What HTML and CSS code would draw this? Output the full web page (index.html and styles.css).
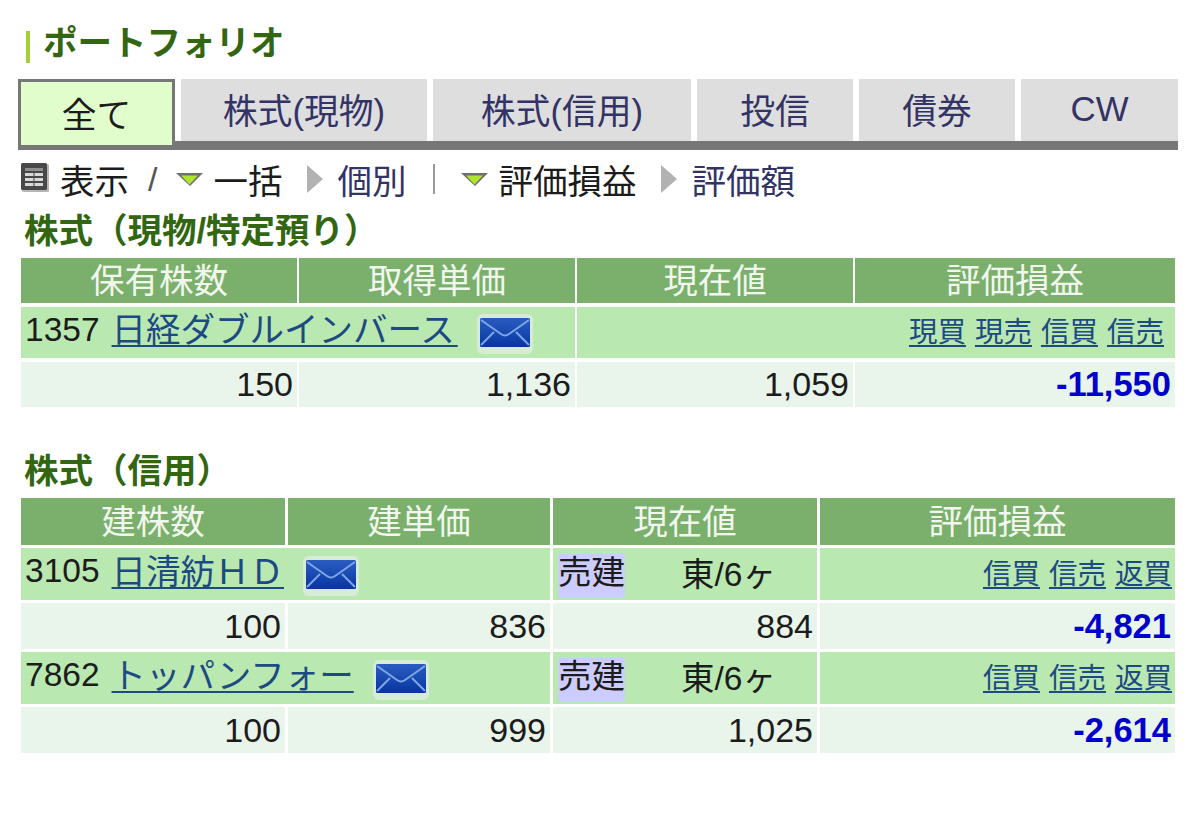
FILE: index.html
```html
<!DOCTYPE html>
<html lang="ja">
<head>
<meta charset="utf-8">
<title>ポートフォリオ</title>
<link rel="stylesheet" href="styles.css">
</head>
<body>
<svg class="defs" width="0" height="0" aria-hidden="true">
  <defs>
    <linearGradient id="envfill" x1="0" y1="0" x2="0" y2="1">
      <stop offset="0" stop-color="#2a5cc0"/>
      <stop offset="0.6" stop-color="#1446ae"/>
      <stop offset="1" stop-color="#0a33a0"/>
    </linearGradient>
    <symbol id="env" viewBox="0 0 56 40">
      <rect x="0" y="0" width="56" height="40" rx="6" fill="#d6ecd6"/>
      <rect x="3" y="4" width="50" height="29" rx="1.5" fill="url(#envfill)"/>
      <path d="M4 6 L24 20 Q28 23 32 20 L52 6 M4 31 L17 18 M52 31 L39 18" fill="none" stroke="#7fa6e4" stroke-width="2"/>
    </symbol>
  </defs>
</svg>

<h1 class="title"><span class="title-bar"></span>ポートフォリオ</h1>

<nav class="tabs">
  <a class="tab tab-active tab-all">全て</a>
  <a class="tab tab-spot">株式(現物)</a>
  <a class="tab tab-margin">株式(信用)</a>
  <a class="tab tab-fund">投信</a>
  <a class="tab tab-bond">債券</a>
  <a class="tab tab-cw">CW</a>
</nav>

<div class="toolbar">
  <svg class="icon-table" viewBox="0 0 28 29" width="28" height="29" aria-hidden="true">
    <rect x="1" y="1" width="27" height="28" rx="1.5" fill="#b5b5b5"/>
    <rect x="0" y="0" width="26" height="27" rx="1.5" fill="#484848"/>
    <rect x="4" y="5" width="18" height="3" fill="#8e8e8e"/>
    <rect x="4" y="10" width="8.5" height="3" fill="#d8d8d8"/>
    <rect x="13.5" y="10" width="8.5" height="3" fill="#d8d8d8"/>
    <rect x="4" y="15" width="8.5" height="3" fill="#d8d8d8"/>
    <rect x="13.5" y="15" width="8.5" height="3" fill="#d8d8d8"/>
    <rect x="4" y="20" width="8.5" height="3" fill="#d8d8d8"/>
    <rect x="13.5" y="20" width="8.5" height="3" fill="#d8d8d8"/>
  </svg>
  <span class="tool-label">表示</span>
  <span class="tool-slash">/</span>
  <svg class="tri-down" viewBox="0 0 27 14" width="27" height="14" aria-hidden="true">
    <path d="M0 1 H27 L14 14 Z" fill="#6f6f6f"/><path d="M5 3.5 H22 L13.5 12.5 Z" fill="#aee32e"/>
  </svg>
  <span class="tool-label">一括</span>
  <svg class="tri-right" viewBox="0 0 16 28" width="16" height="28" aria-hidden="true">
    <path d="M0 0 L16 14 L0 28 Z" fill="#b2b2b2"/>
  </svg>
  <a class="tool-link">個別</a>
  <span class="tool-pipe"></span>
  <svg class="tri-down" viewBox="0 0 27 14" width="27" height="14" aria-hidden="true">
    <path d="M0 1 H27 L14 14 Z" fill="#6f6f6f"/><path d="M5 3.5 H22 L13.5 12.5 Z" fill="#aee32e"/>
  </svg>
  <span class="tool-label">評価損益</span>
  <svg class="tri-right" viewBox="0 0 16 28" width="16" height="28" aria-hidden="true">
    <path d="M0 0 L16 14 L0 28 Z" fill="#b2b2b2"/>
  </svg>
  <a class="tool-link">評価額</a>
</div>

<h2 class="section">株式（現物/特定預り）</h2>
<div class="grid grid-spot">
  <div class="th">保有株数</div>
  <div class="th">取得単価</div>
  <div class="th">現在値</div>
  <div class="th">評価損益</div>

  <div class="name span2"><span class="code">1357</span><a class="link name-link">日経ダブルインバース&#8202;</a><svg class="env" aria-hidden="true"><use href="#env"/></svg></div>
  <div class="name actions actions-spot span2"><a class="link">現買</a><a class="link">現売</a><a class="link">信買</a><a class="link">信売</a></div>

  <div class="num">150</div>
  <div class="num">1,136</div>
  <div class="num">1,059</div>
  <div class="num pl">-11,550</div>
</div>

<h2 class="section section-second">株式（信用）</h2>
<div class="grid grid-margin">
  <div class="th">建株数</div>
  <div class="th">建単価</div>
  <div class="th">現在値</div>
  <div class="th">評価損益</div>

  <div class="name span2"><span class="code">3105</span><a class="link name-link">日清紡ＨＤ</a><svg class="env" aria-hidden="true"><use href="#env"/></svg></div>
  <div class="name market"><span class="badge">売建</span><span class="exch">東/6ヶ</span></div>
  <div class="name actions"><a class="link">信買</a><a class="link">信売</a><a class="link">返買</a></div>

  <div class="num">100</div>
  <div class="num">836</div>
  <div class="num">884</div>
  <div class="num pl">-4,821</div>

  <div class="name span2"><span class="code">7862</span><a class="link name-link">トッパンフォー</a><svg class="env" aria-hidden="true"><use href="#env"/></svg></div>
  <div class="name market"><span class="badge">売建</span><span class="exch">東/6ヶ</span></div>
  <div class="name actions"><a class="link">信買</a><a class="link">信売</a><a class="link">返買</a></div>

  <div class="num">100</div>
  <div class="num">999</div>
  <div class="num">1,025</div>
  <div class="num pl">-2,614</div>
</div>
</body>
</html>
```

FILE: styles.css
```css
* { box-sizing: border-box; }
html, body { margin: 0; padding: 0; }
body {
  width: 1200px;
  height: 830px;
  overflow: hidden;
  background: #fff;
  color: #1c1c1c;
  font-family: "Liberation Sans", "Noto Sans CJK JP", sans-serif;
  font-size: 34px;
  padding: 20px 0 0 18px;
}
.defs { position: absolute; }

.title {
  display: flex;
  align-items: center;
  margin: 0 0 0 8px;
  height: 46px;
  font-size: 34.5px;
  line-height: 46px;
  font-weight: 700;
  color: #336611;
}
.title-bar {
  width: 4px;
  height: 32px;
  margin: 7px 13px 0 0;
  background: #a6ce39;
}

.tabs {
  display: flex;
  gap: 6px;
  width: 1160px;
  height: 71px;
  margin-top: 13px;
  border-bottom: 9px solid #777;
}
.tab {
  display: flex;
  align-items: center;
  justify-content: center;
  height: 62px;
  background: #dedede;
  color: #333366;
  font-size: 34.8px;
  padding-bottom: 2px;
}
.tab-active {
  height: 69px;
  background: #e2fdcc;
  border: 3px solid #777;
  color: #1c1c1c;
  padding: 0 0 2px;
  position: relative;
}
.tab-all { width: 157px; }
.tab-spot { width: 246px; }
.tab-margin { width: 258px; }
.tab-fund { width: 156px; }
.tab-bond { width: 156px; }
.tab-cw { width: 157px; }

.toolbar {
  display: flex;
  align-items: center;
  height: 44px;
  margin: 7px 0 0 3px;
  font-size: 34.5px;
}
.icon-table { margin: -4px 11px 0 0; }
.tool-label { color: #1c1c1c; }
.tool-link { color: #333366; }
.tool-slash { color: #555; margin: 0 19px; font-size: 34px; }
.tri-down { margin: 0 10px 0 0; }
.tri-right { margin: 0 14px 0 25px; }
.tool-pipe {
  width: 2px;
  height: 30px;
  background: #999;
  margin: 0 26px 0 27px;
}

.section {
  margin: 8px 0 0 6px;
  height: 44px;
  font-size: 34.5px;
  line-height: 44px;
  font-weight: 700;
  color: #336611;
}
.section-second { margin-top: 42px; }

.grid {
  display: grid;
  width: 1154px;
  margin-left: 3px;
  margin-top: 5px;
}
.grid-spot {
  grid-template-columns: 276px 276px 276px 320px;
  grid-template-rows: 45px 51px 45px;
  column-gap: 2px;
  row-gap: 4px;
}
.grid-margin {
  grid-template-columns: 264px 262px 264px 355px;
  grid-template-rows: 47px 52px 46px 52px 46px;
  column-gap: 3px;
  row-gap: 3px;
}
.th {
  display: flex;
  align-items: center;
  justify-content: center;
  background: #7ab06c;
  color: #f2f7ee;
  font-size: 34.5px;
  padding-bottom: 6px;
}
.name {
  display: flex;
  align-items: center;
  background: #b9e8b0;
  padding: 0 4px 6px;
  white-space: pre;
  font-size: 34.5px;
}
.code { font-size: 33.5px; margin-right: 12px; }
.span2 { grid-column: span 2; }
.link {
  color: #1d4a82;
  text-decoration: underline;
  text-underline-offset: 3px;
  text-decoration-thickness: 2px;
}
.name-link { margin-bottom: 5px; }
.actions {
  justify-content: flex-end;
  gap: 9px;
  font-size: 28.5px;
  padding-right: 3px;
}
.actions-spot { padding-right: 11px; }
.market { padding-left: 5px; }
.badge {
  background: #ccccff;
  color: #1c1c1c;
  height: 43px;
  line-height: 38px;
  margin-top: 8px;
  font-size: 33.5px;
}
.exch { margin-left: 56px; font-size: 33.5px; }
.num {
  display: flex;
  align-items: center;
  justify-content: flex-end;
  background: #e9f4ea;
  padding-right: 4px;
}
.pl { color: #0000cc; font-weight: 700; font-size: 34.5px; }
.env { width: 56px; height: 40px; flex: none; margin-top: 9px; margin-left: 19px; filter: blur(0.6px); }
```
